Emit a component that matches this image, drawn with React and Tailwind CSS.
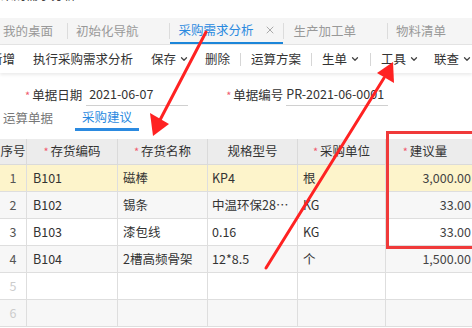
import { ChevronDown, X } from "lucide-react";

const font = { fontFamily: '"Noto Sans CJK SC", "Liberation Sans", sans-serif' };

const rows = [
  ["1", "B101", "磁棒", "KP4", "根", "3,000.00"],
  ["2", "B102", "锡条", "中温环保28…", "KG", "33.00"],
  ["3", "B103", "漆包线", "0.16", "KG", "33.00"],
  ["4", "B104", "2槽高频骨架", "12*8.5", "个", "1,500.00"],
  ["5", "", "", "", "", ""],
  ["6", "", "", "", "", ""],
];

const Sep = () => <span className="block w-px h-[13px] bg-[#d6d6d6]" />;
const TabSep = () => <span className="w-px h-[16px] bg-[#dcdcdc]" />;

const Dd = ({ children }) => (
  <span className="flex items-center gap-[3px]">
    {children}
    <ChevronDown size={10} strokeWidth={3} className="text-[#444]" />
  </span>
);

const Req = () => <span className="text-[#f05a6e] text-[11px] mr-[2px]">*</span>;

export default function App() {
  return (
    <div className="relative w-[472px] h-[328px] overflow-hidden bg-white text-[12.5px] text-[#333]" style={font}>
      {/* page title, cut at top */}
      <div className="h-[18px] overflow-hidden">
        <div className="-mt-[14px] pl-[1px] text-[#444] leading-[18px]">采购需求分析</div>
      </div>

      {/* tab bar */}
      <div className="h-[27px] bg-[#f5f5f5] border-b border-[#e4e4e4] flex items-stretch whitespace-nowrap">
        <div className="flex items-center pl-[3px] pr-[14px] text-[#999]">我的桌面</div>
        <div className="flex items-center"><TabSep /></div>
        <div className="flex items-center pl-[8px] pr-[30px] text-[#999]">初始化导航</div>
        <div className="flex items-center"><TabSep /></div>
        <div className="flex items-center gap-[10px] pl-[9px] pr-[7px] border-b-2 border-[#1c86d9] text-[#2b8ae0]">
          采购需求分析
          <X size={12} className="text-[#aaa]" />
        </div>
        <div className="flex items-center"><TabSep /></div>
        <div className="flex items-center pl-[10px] pr-[31px] text-[#999]">生产加工单</div>
        <div className="flex items-center"><TabSep /></div>
        <div className="flex items-center pl-[8px] text-[#999]">物料清单</div>
      </div>

      {/* toolbar */}
      <div className="h-[28px] flex items-center shadow-[0_2px_3px_rgba(0,0,0,0.08)] text-[#333] whitespace-nowrap">
        <span className="-ml-[10px]">新增</span>
        <span className="ml-[18px]">执行采购需求分析</span>
        <span className="ml-[18px]"><Dd>保存</Dd></span>
        <span className="ml-[16px]">删除</span>
        <span className="ml-[10px]"><Sep /></span>
        <span className="ml-[10px]">运算方案</span>
        <span className="ml-[10px]"><Sep /></span>
        <span className="ml-[10px]"><Dd>生单</Dd></span>
        <span className="ml-[10px]"><Sep /></span>
        <span className="ml-[10px]"><Dd>工具</Dd></span>
        <span className="ml-[15px]"><Dd>联查</Dd></span>
      </div>

      {/* form */}
      <div className="flex items-end h-[33px]">
        <div className="flex items-center ml-[25px]">
          <Req />
          <span>单据日期</span>
          <span className="ml-[4px] w-[102px] border-b border-[#d0d0d0] pb-[1px] pl-[3px] text-[#333]">2021-06-07</span>
        </div>
        <div className="flex items-center ml-[38px]">
          <Req />
          <span>单据编号</span>
          <span className="ml-[3px] w-[102px] border-b border-[#d0d0d0] pb-[1px] text-[#333]">PR-2021-06-0001</span>
        </div>
      </div>

      {/* sub tabs */}
      <div className="flex h-[25px] items-stretch">
        <div className="flex items-center pl-[3px] text-[#777]">运算单据</div>
        <div className="ml-[22px] flex items-center px-[7px] text-[#2b8ae0] border-b-[3px] border-[#2b8ae0]">采购建议</div>
      </div>

      {/* table */}
      <div className="mt-[8px] grid grid-cols-[27px_91px_90px_90px_88px_90px]">
        <div className="h-[26px] bg-[#ececec] border-b border-r border-[#dadada] flex items-center justify-center">序号</div>
        <div className="h-[26px] bg-[#ececec] border-b border-r border-[#dadada] flex items-center justify-center"><Req />存货编码</div>
        <div className="h-[26px] bg-[#ececec] border-b border-r border-[#dadada] flex items-center justify-center"><Req />存货名称</div>
        <div className="h-[26px] bg-[#ececec] border-b border-r border-[#dadada] flex items-center justify-center">规格型号</div>
        <div className="h-[26px] bg-[#ececec] border-b border-r border-[#dadada] flex items-center justify-center"><Req />采购单位</div>
        <div className="h-[26px] bg-[#ececec] border-b border-[#dadada] flex items-center justify-center pr-[12px]"><Req />建议量</div>
        {rows.map((r, i) => {
          const bg = i === 0 ? "bg-[#fdf4cb]" : i % 2 === 1 ? "bg-[#f7f7f7]" : "bg-white";
          const cell = `h-[27px] ${bg} border-b border-[#dedede] flex items-center`;
          return [
            <div key={`${i}a`} className={`${cell} border-r justify-center ${i > 3 ? "text-[#ccc]" : "text-[#555]"}`}>{r[0]}</div>,
            <div key={`${i}b`} className={`${cell} border-r pl-[6px]`}>{r[1]}</div>,
            <div key={`${i}c`} className={`${cell} border-r pl-[5px]`}>{r[2]}</div>,
            <div key={`${i}d`} className={`${cell} border-r pl-[4px] whitespace-nowrap overflow-hidden`}>{r[3]}</div>,
            <div key={`${i}e`} className={`${cell} border-r pl-[5px]`}>{r[4]}</div>,
            <div key={`${i}f`} className={`${cell} justify-end pr-[5px] text-[#444]`}>{r[5]}</div>,
          ];
        })}
      </div>

      {/* red highlight box */}
      <div className="absolute left-[386px] top-[131px] w-[100px] h-[118px] border-[3px] border-[#f03a3a]" />

      {/* red arrows */}
      <svg className="absolute inset-0 pointer-events-none" width="472" height="328" viewBox="0 0 472 328">
        <line x1="206" y1="32" x2="160" y2="120" stroke="#f22" strokeWidth="3" strokeLinecap="round" />
        <polygon points="153,136 150,113 169,124" fill="#f22" />
        <line x1="266" y1="268" x2="384" y2="78" stroke="#f22" strokeWidth="3" strokeLinecap="round" />
        <polygon points="393,62 377,73 394,83" fill="#f22" />
      </svg>
    </div>
  );
}
